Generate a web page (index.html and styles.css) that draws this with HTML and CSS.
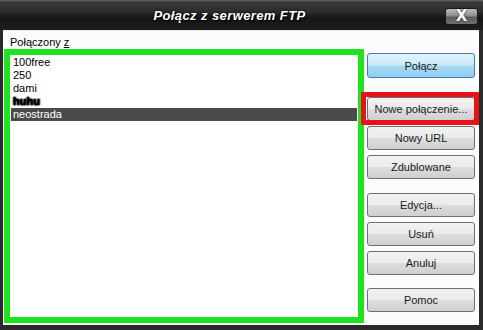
FILE: index.html
```html
<!DOCTYPE html>
<html lang="pl">
<head>
  <meta charset="UTF-8" />
  <title>Połącz z serwerem FTP</title>
  <link rel="stylesheet" href="styles.css">
</head>
<body>

<div class="window">
  <div class="titlebar">
    <div class="title">Połącz z serwerem FTP</div>
    <button class="close">X</button>
  </div>

  <div class="content">
    <div class="left">
      <div class="label">Połączony <u>z</u></div>
      <div class="list mark-green">
        <div class="item">100free</div>
        <div class="item">250</div>
        <div class="item">dami</div>
        <div class="item"><span class="blur">huhu</span></div>
        <div class="item selected">neostrada</div>
      </div>
    </div>

    <div class="right">
      <button class="btn primary">Połącz</button>
      <div class="mark-red first">
        <button class="btn">Nowe połączenie...</button>
      </div>
      <button class="btn">Nowy URL</button>
      <button class="btn">Zdublowane</button>
      <button class="btn spaced">Edycja...</button>
      <button class="btn">Usuń</button>
      <button class="btn">Anuluj</button>
      <button class="btn spaced2">Pomoc</button>
    </div>
  </div>
</div>

</body>
</html>
```

FILE: styles.css
```css
body { margin: 0; font-family: "Liberation Sans", Arial, sans-serif; font-size: 11px; background: #fff; }
.window { width: 483px; height: 330px; box-sizing: border-box; display: flex; flex-direction: column; background: #2b2b2b; border-left: 3px solid #2a2a2a; border-right: 4px solid #2a2a2a; border-bottom: 5px solid #2a2a2a; }
.titlebar { height: 30px; margin: 0 -4px 0 -3px; display: flex; align-items: flex-start; background: linear-gradient(#6a6a6a 0, #3a3a3a 2px, #2c2c2c 40%, #151515 60%, #1e1e1e 100%); }
.title { flex: 1; text-align: center; padding-left: 14px; padding-top: 8px; color: #fff; font-weight: bold; font-style: italic; font-size: 13px; letter-spacing: 0.4px; text-shadow: 0 0 3px #000, 1px 1px 1px #000; }
.close { width: 33px; height: 17px; margin: 8px 5px 0 0; padding: 0; border: 1px solid #1a1a1a; border-radius: 3px; background: linear-gradient(#bcbcbc 0, #8e8e8e 45%, #5e5e5e 55%, #707070 100%); color: #fff; font-weight: bold; font-size: 15px; line-height: 15px; font-family: "DejaVu Sans", sans-serif; text-shadow: 0 0 2px #000; }
.content { flex: 1; display: flex; background: #fbfcfb; padding: 5px 4px 0 6px; border-top: 1px solid #e8e8e8; }
.left { width: 350px; }
.label { margin-left: 1px; line-height: 13px; }
.list { position: relative; margin-top: 5px; height: 261px; background: #fff; border: 1px solid #a0a0a0; padding: 1px 0 0 1px; }
.item { height: 13px; line-height: 13px; padding-left: 2px; }
.item.selected { background: #4a4a4a; color: #fff; margin-right: 1px; }
.blur { display: inline-block; color: transparent; font-weight: bold; text-shadow: 0 0 2px #000, 0 0 2px #000, 0 0 1px #000, 0 0 1px #000; }
.mark-green::after { content: ""; position: absolute; left: -6px; top: -6px; right: -6px; bottom: -6px; border: 6px solid #1fe31f; }
.right { margin-left: 8px; width: 108px; display: flex; flex-direction: column; padding-top: 17px; }
.btn { height: 24px; width: 108px; margin-top: 5px; padding: 0; border: 1px solid #707070; border-radius: 3px; font-family: "Liberation Sans", Arial, sans-serif; font-size: 11px; font-weight: normal; color: #1a1a1a; background: linear-gradient(#f2f2f2 0, #ebebeb 48%, #dddddd 52%, #cfcfcf 100%); }
.btn.primary { height: 25px; margin-top: 0; border-color: #3c7fb1; background: linear-gradient(#e3f4fd 0, #c9e9fa 48%, #a9dbf5 52%, #90cdef 100%); }
.mark-red { position: relative; height: 24px; }
.mark-red.first { margin-top: 19px; }
.mark-red .btn { margin-top: 0; }
.mark-red::after { content: ""; position: absolute; left: -6px; top: -5px; right: -4px; bottom: -4px; border: 5px solid #e8131a; }
.btn.spaced { margin-top: 14px; }
.btn.spaced2 { margin-top: 13px; }
```
